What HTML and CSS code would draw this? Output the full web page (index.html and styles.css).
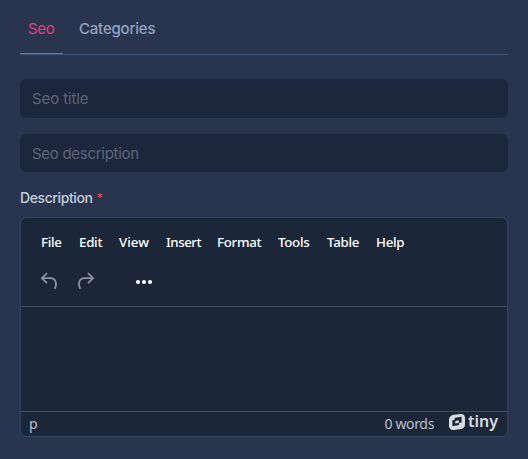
FILE: index.html
```html
<!DOCTYPE html>
<html lang="en">
<head>
<meta charset="utf-8">
<title>Seo</title>
<link rel="stylesheet" href="styles.css">
</head>
<body>
<nav class="tabs">
  <a class="tab tab-active"><span class="seo">Seo</span></a>
  <a class="tab"><span class="categories">Categories</span></a>
</nav>
<div class="field field-title"><span>Seo title</span></div>
<div class="field field-description"><span>Seo description</span></div>
<div class="label"><span class="label-text">Description</span><span class="required">*</span></div>
<section class="editor">
  <header class="editor-header">
    <div class="menubar">
      <span class="file">File</span><span class="edit">Edit</span><span class="view">View</span><span class="insert">Insert</span><span class="format">Format</span><span class="tools">Tools</span><span class="table">Table</span><span class="help">Help</span>
    </div>
    <div class="toolbar">
      <svg class="undo" width="18" height="18" viewBox="0 0 18 18"><path d="M7 1.2 1.9 6.2 7 11.2M2 6.2H10.5C15.8 6.2 17.4 11.5 14.7 16.9"/></svg>
      <svg class="redo" width="18" height="18" viewBox="0 0 18 18"><path d="M11 1.2 16.1 6.2 11 11.2M16 6.2H7.5C2.2 6.2.6 11.5 3.3 16.9"/></svg>
      <svg class="more" width="18" height="6" viewBox="0 0 18 6"><circle cx="3" cy="3" r="2.1"/><circle cx="9" cy="3" r="2.1"/><circle cx="15" cy="3" r="2.1"/></svg>
    </div>
  </header>
  <div class="editor-body"></div>
  <footer class="statusbar">
    <span class="path">p</span>
    <span class="words">0 words</span>
    <span class="brand">
      <svg width="16" height="16" viewBox="0 0 16 16"><path fill-rule="evenodd" d="M5 .8 11.5 0Q15.8-.2 16 4v6.5q-.1 3.8-4 4.5l-6.8 1Q.4 16.3 0 12V5.8Q.2 1.6 5 .8ZM5.8 3.8v2L3.4 6.3v5.9l6.6-1.2V9l2.6-.5V2.7ZM6.3 7l3.5-.7v2.5l-3.5.7Z"/></svg>
      <b>tiny</b>
    </span>
  </footer>
</section>
</body>
</html>
```

FILE: styles.css
```css
* { box-sizing: border-box; }
body {
  margin: 0;
  height: 459px;
  padding: 0 20px;
  overflow: hidden;
  background: #29354f;
  font-family: Inter, "Liberation Sans", sans-serif;
}
.tabs {
  display: flex;
  height: 55px;
  border-bottom: 1px solid #435575;
}
.tab {
  height: 54px;
  padding: 19px 8px 0;
  border-bottom: 1px solid transparent;
  font-size: 15px;
  font-weight: 500;
  line-height: 20px;
  color: #94a3c0;
}
.tab-active {
  width: 43px;
  margin-right: 8px;
  border-color: #e63d78;
  color: #e63d78;
}
.seo { font-weight: 400; letter-spacing: -0.3px; }
.categories { letter-spacing: -0.2px; }
.field {
  padding: 0 12px;
  border-radius: 6px;
  background: #1c263d;
  color: #5c6779;
  font-size: 15px;
}
.field-title { height: 39px; margin-top: 24px; line-height: 39px; letter-spacing: -0.1px; }
.field-description { height: 38px; margin-top: 16px; line-height: 39px; letter-spacing: -0.28px; }
.label {
  display: flex;
  gap: 4px;
  height: 45px;
  padding-top: 17px;
  font-size: 14px;
  font-weight: 500;
  line-height: 18px;
  color: #c5cedc;
}
.label-text { letter-spacing: -0.4px; }
.required { color: #e04450; font-size: 12px; }
.editor {
  display: flex;
  flex-direction: column;
  height: 220px;
  border: 1px solid #354665;
  border-radius: 6px;
  background: #1c2639;
  font-family: "Noto Sans", "Open Sans", sans-serif;
}
.editor-header { height: 89px; border-bottom: 1px solid #454d5d; }
.menubar {
  display: flex;
  height: 49px;
  padding: 15px 0 0 20px;
  font-size: 13.3px;
  font-weight: 500;
  line-height: 19px;
  letter-spacing: -0.28px;
  color: #fff;
}
.file { width: 38px; }
.edit { width: 40px; }
.view { width: 47px; letter-spacing: 0; }
.insert { width: 51px; letter-spacing: -0.45px; }
.format { width: 61px; }
.tools { width: 49px; }
.table { width: 49px; }
.toolbar { display: flex; padding: 5px 0 0 19px; }
.toolbar svg { fill: none; stroke: #8b919e; stroke-width: 1.8; }
.toolbar .redo { margin-left: 19px; }
.toolbar .more { margin: 7px 0 0 40px; fill: #fff; stroke: none; }
.editor-body { flex: 1; }
.statusbar {
  display: flex;
  height: 25px;
  padding: 0 9px 0 8px;
  border-top: 1px solid #454d5d;
  font-size: 14px;
  line-height: 24px;
  color: #bbc0c8;
}
.words { margin-left: auto; letter-spacing: -0.35px; }
.brand {
  display: flex;
  width: 49px;
  margin-left: 15px;
  padding-top: 2px;
  color: #d8dbe1;
}
.brand svg { flex: none; fill: #d8dbe1; }
.brand b {
  margin-left: 3px;
  font-family: "Noto Sans", sans-serif;
  font-size: 16px;
  font-weight: 600;
  line-height: 15px;
}
```
